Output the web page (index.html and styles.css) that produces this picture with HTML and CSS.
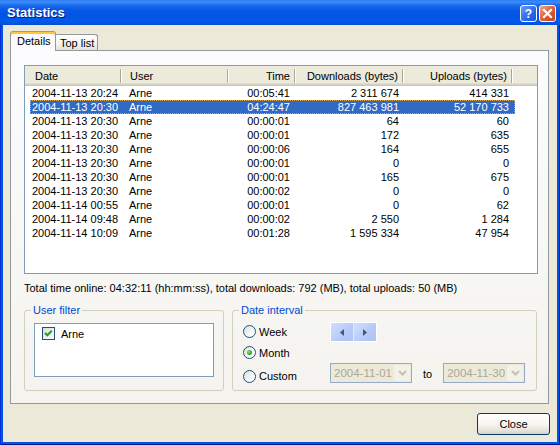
FILE: index.html
```html
<!DOCTYPE html>
<html>
<head>
<meta charset="utf-8">
<title>Statistics</title>
<link rel="stylesheet" href="styles.css">
</head>
<body>
<div class="window">
  <div class="titlebar">
    <span class="title">Statistics</span>
    <div class="tb-buttons">
      <span class="tb-btn help">?</span>
      <span class="tb-btn close">
        <svg width="11" height="11" viewBox="0 0 11 11"><path d="M2 2 L9 9 M9 2 L2 9" stroke="#fff" stroke-width="2.2" stroke-linecap="square"/></svg>
      </span>
    </div>
  </div>
  <div class="client">
    <div class="tabs">
      <div class="tab active">Details</div>
      <div class="tab">Top list</div>
    </div>
    <div class="panel">
      <div class="list">
        <div class="lv-header">
          <div class="hc c-date">Date</div>
          <div class="hc c-user">User</div>
          <div class="hc c-time r">Time</div>
          <div class="hc c-dl r">Downloads (bytes)</div>
          <div class="hc c-ul r">Uploads (bytes)</div>
          <div class="hc-fill"></div>
        </div>
        <div class="rows">
          <div class="row"><span class="c c-date">2004-11-13 20:24</span><span class="c c-user">Arne</span><span class="c c-time r">00:05:41</span><span class="c c-dl r">2 311 674</span><span class="c c-ul r">414 331</span></div>
          <div class="row sel"><span class="c c-date">2004-11-13 20:30</span><span class="c c-user">Arne</span><span class="c c-time r">04:24:47</span><span class="c c-dl r">827 463 981</span><span class="c c-ul r">52 170 733</span></div>
          <div class="row"><span class="c c-date">2004-11-13 20:30</span><span class="c c-user">Arne</span><span class="c c-time r">00:00:01</span><span class="c c-dl r">64</span><span class="c c-ul r">60</span></div>
          <div class="row"><span class="c c-date">2004-11-13 20:30</span><span class="c c-user">Arne</span><span class="c c-time r">00:00:01</span><span class="c c-dl r">172</span><span class="c c-ul r">635</span></div>
          <div class="row"><span class="c c-date">2004-11-13 20:30</span><span class="c c-user">Arne</span><span class="c c-time r">00:00:06</span><span class="c c-dl r">164</span><span class="c c-ul r">655</span></div>
          <div class="row"><span class="c c-date">2004-11-13 20:30</span><span class="c c-user">Arne</span><span class="c c-time r">00:00:01</span><span class="c c-dl r">0</span><span class="c c-ul r">0</span></div>
          <div class="row"><span class="c c-date">2004-11-13 20:30</span><span class="c c-user">Arne</span><span class="c c-time r">00:00:01</span><span class="c c-dl r">165</span><span class="c c-ul r">675</span></div>
          <div class="row"><span class="c c-date">2004-11-13 20:30</span><span class="c c-user">Arne</span><span class="c c-time r">00:00:02</span><span class="c c-dl r">0</span><span class="c c-ul r">0</span></div>
          <div class="row"><span class="c c-date">2004-11-14 00:55</span><span class="c c-user">Arne</span><span class="c c-time r">00:00:01</span><span class="c c-dl r">0</span><span class="c c-ul r">62</span></div>
          <div class="row"><span class="c c-date">2004-11-14 09:48</span><span class="c c-user">Arne</span><span class="c c-time r">00:00:02</span><span class="c c-dl r">2 550</span><span class="c c-ul r">1 284</span></div>
          <div class="row"><span class="c c-date">2004-11-14 10:09</span><span class="c c-user">Arne</span><span class="c c-time r">00:01:28</span><span class="c c-dl r">1 595 334</span><span class="c c-ul r">47 954</span></div>
        </div>
      </div>
      <div class="summary">Total time online: 04:32:11 (hh:mm:ss), total downloads: 792 (MB), total uploads: 50 (MB)</div>
      <div class="groups">
        <fieldset class="group user-filter">
          <legend>User filter</legend>
          <div class="group-body uf-body">
            <div class="listbox">
              <div class="check-item">
                <span class="checkbox">
                  <svg width="11" height="11" viewBox="0 0 11 11"><polyline points="2,5 4.3,7.3 8.8,2.8" fill="none" stroke="#21A121" stroke-width="2"/></svg>
                </span>
                <span>Arne</span>
              </div>
            </div>
          </div>
        </fieldset>
        <fieldset class="group date-interval">
          <legend>Date interval</legend>
          <div class="group-body di-body">
            <div class="di-row r1">
              <div class="radio-item"><span class="radio"></span><span>Week</span></div>
              <div class="spin">
                <span class="spin-half">
                  <svg width="4" height="7" viewBox="0 0 4 7"><path d="M4 0 L0 3.5 L4 7 Z" fill="#43577D"/></svg>
                </span>
                <span class="spin-half">
                  <svg width="4" height="7" viewBox="0 0 4 7"><path d="M0 0 L4 3.5 L0 7 Z" fill="#43577D"/></svg>
                </span>
              </div>
            </div>
            <div class="di-row r2">
              <div class="radio-item"><span class="radio on"><span class="dot"></span></span><span>Month</span></div>
            </div>
            <div class="di-row r3">
              <div class="radio-item"><span class="radio"></span><span>Custom</span></div>
              <div class="combo"><span class="combo-text">2004-11-01</span><span class="combo-btn"><svg width="9" height="6" viewBox="0 0 9 6"><path d="M1 1 L4.5 4.5 L8 1" fill="none" stroke="#C4C2B5" stroke-width="2"/></svg></span></div>
              <span class="to">to</span>
              <div class="combo"><span class="combo-text">2004-11-30</span><span class="combo-btn"><svg width="9" height="6" viewBox="0 0 9 6"><path d="M1 1 L4.5 4.5 L8 1" fill="none" stroke="#C4C2B5" stroke-width="2"/></svg></span></div>
            </div>
          </div>
        </fieldset>
      </div>
    </div>
    <div class="footer">
      <button class="btn">Close</button>
    </div>
  </div>
</div>
</body>
</html>
```
FILE: styles.css
```css
* { box-sizing: border-box; }
html, body { margin: 0; padding: 0; }
body {
  width: 560px;
  height: 445px;
  overflow: hidden;
  font-family: "Liberation Sans", Arial, sans-serif;
  font-size: 11px;
  color: #000;
  background: #0055E5;
}

.window {
  width: 560px;
  height: 445px;
  display: flex;
  flex-direction: column;
  background: #0055E5;
  box-shadow: inset 1px 0 #0831D9, inset -1px 0 #001EA0, inset 0 -1px #00138C;
}

.titlebar {
  height: 25px;
  flex: none;
  display: flex;
  align-items: center;
  padding: 0 4px 0 7px;
  background: linear-gradient(#2C7BF6 0, #3D8EF8 2px, #1D6BEE 5px, #0858E6 10px, #0055E5 16px, #0259EC 21px, #0550D8 25px);
}
.title {
  flex: 1;
  color: #fff;
  font-weight: bold;
  font-size: 13px;
  text-shadow: 1px 1px #0A1883;
}
.tb-buttons { display: flex; gap: 2px; margin-top: 2px; }
.tb-btn {
  width: 17px;
  height: 17px;
  border: 1px solid #fff;
  border-radius: 3px;
  display: flex;
  align-items: center;
  justify-content: center;
  color: #fff;
  font-weight: bold;
  font-size: 12px;
}
.help { background: linear-gradient(135deg, #6C9DF9, #2A68EC 60%, #1C55D6); }
.close { background: linear-gradient(135deg, #EDA58B, #DD5A32 55%, #C2421D); }

.client {
  flex: 1;
  margin: 0 3px 3px 3px;
  background: #ECE9D8;
  padding: 6px 8px 0 7px;
  display: flex;
  flex-direction: column;
}

.tabs {
  display: flex;
  align-items: flex-end;
  height: 20px;
  margin-bottom: -1px;
  position: relative;
  z-index: 1;
}
.tab {
  height: 16px;
  width: 42px;
  margin-bottom: 1px;
  padding-left: 4px;
  border: 1px solid #919B9C;
  border-bottom: none;
  border-left: none;
  border-radius: 0 3px 0 0;
  background: linear-gradient(#FFFFFF, #F3F3EF 60%, #E2E1DA);
  display: flex;
  align-items: center;
}
.tab.active {
  height: 20px;
  width: 46px;
  margin-bottom: 0;
  padding-left: 6px;
  padding-bottom: 2px;
  border-left: 1px solid #919B9C;
  border-top: 1px solid #E68B2C;
  border-radius: 3px 3px 0 0;
  background: #FCFCFE;
  box-shadow: inset 0 2px #FFC73C;
}

.panel {
  width: 539px;
  height: 354px;
  border: 1px solid #919B9C;
  background: linear-gradient(#FCFCFE, #F4F3EE);
  padding: 14px 0 0 13px;
}

.list {
  width: 514px;
  height: 209px;
  border: 1px solid #7F9DB9;
  background: #fff;
}
.lv-header {
  display: flex;
  height: 20px;
  background: linear-gradient(#EBEADB 0, #EBEADB 17px, #E2DECD 17px, #E2DECD 18px, #D6D2C2 18px, #D6D2C2 19px, #CBC7B8 19px);
}
.hc {
  height: 17px;
  display: flex;
  align-items: center;
  padding-top: 2px;
  background: linear-gradient(to right, #ACA899 0, #ACA899 1px, #fff 1px, #fff 2px) no-repeat right 0 top 3px / 2px 14px;
}
.hc-fill { flex: 1; }
.hc.c-date { width: 97px; padding-left: 10px; }
.hc.c-user { width: 107px; padding-left: 8px; }
.hc.c-time { width: 67px; }
.hc.c-dl { width: 108px; }
.hc.c-ul { width: 109px; }
.hc.r { justify-content: flex-end; padding-right: 6px; }

.rows { padding-top: 0; }
.row {
  display: flex;
  height: 14px;
  line-height: 14px;
  margin-left: 5px;
  width: 485px;
  white-space: nowrap;
}
.row.sel {
  background: #316AC5;
  color: #fff;
  outline: 1px dotted #D9A64E;
  outline-offset: -1px;
}
.c { display: block; }
.c.c-date { width: 92px; padding-left: 2px; }
.c.c-user { width: 107px; padding-left: 7px; }
.c.c-time { width: 67px; padding-right: 6px; }
.c.c-dl { width: 108px; padding-right: 5px; }
.c.c-ul { width: 109px; padding-right: 4px; }
.c.r { text-align: right; }

.summary {
  margin-top: 7px;
  line-height: 14px;
  white-space: nowrap;
}

.groups {
  display: flex;
  gap: 8px;
  margin-top: 8px;
}
.group {
  margin: 0;
  padding: 0;
  height: 88px;
  border: 1px solid #D0D0BF;
  border-radius: 3px;
  min-width: 0;
}
.group legend {
  color: #0046D5;
  padding: 0 2px;
  margin-left: 6px;
  line-height: 14px;
  font-size: 11px;
}
.user-filter { width: 200px; }
.date-interval { width: 305px; }

.uf-body { padding: 6px 0 0 9px; }
.listbox {
  width: 180px;
  height: 54px;
  border: 1px solid #7F9DB9;
  background: #fff;
  padding: 3px 0 0 7px;
}
.check-item {
  display: flex;
  align-items: center;
  gap: 6px;
  height: 13px;
}
.checkbox {
  width: 13px;
  height: 13px;
  border: 1px solid #1C5180;
  background: linear-gradient(135deg, #DCDCD7, #FFFFFF);
  display: flex;
  align-items: center;
  justify-content: center;
}

.di-body {
  padding: 4px 0 0 10px;
  display: flex;
  flex-direction: column;
}
.di-row { display: flex; align-items: center; }
.di-row.r1 { height: 21px; }
.di-row.r2 { height: 21px; }
.di-row.r3 { height: 20px; align-items: flex-end; }
.radio-item {
  width: 87px;
  height: 14px;
  display: flex;
  align-items: center;
  gap: 3px;
}
.radio {
  width: 13px;
  height: 13px;
  border-radius: 50%;
  border: 1px solid #1C5180;
  background: linear-gradient(135deg, #DCDCD7, #FFFFFF 80%);
  display: flex;
  align-items: center;
  justify-content: center;
}
.dot {
  width: 5px;
  height: 5px;
  border-radius: 50%;
  background: radial-gradient(circle at 35% 35%, #7BE07B, #21A121 70%);
}

.spin {
  display: flex;
  width: 47px;
  height: 20px;
  border: 1px solid #fff;
  margin-top: 1px;
}
.spin-half {
  flex: 1;
  display: flex;
  align-items: center;
  justify-content: center;
  background: linear-gradient(135deg, #D3DEFC, #B6C9F8 60%, #AFC4F6);
}
.spin-half + .spin-half { border-left: 1px solid #E4EAF9; }

.combo {
  width: 82px;
  height: 20px;
  border: 1px solid #95AAC5;
  background: #ECE9D8;
  display: flex;
  align-items: center;
  padding: 1px;
  align-self: flex-start;
}
.combo-text {
  flex: 1;
  color: #ACA899;
  padding-left: 2px;
  font-size: 11.5px;
}
.combo-btn {
  width: 16px;
  height: 16px;
  border-radius: 2px;
  background: #F3F1EA;
  display: flex;
  align-items: center;
  justify-content: center;
}
.to {
  margin: 0 11px;
  align-self: center;
  line-height: 14px;
  padding-top: 2px;
}

.footer {
  display: flex;
  justify-content: flex-end;
  padding-top: 9px;
  margin-right: -1px;
}
.btn {
  width: 73px;
  height: 22px;
  border: 1px solid #003C74;
  border-radius: 3px;
  background: linear-gradient(#FFFFFF, #F5F4F0 55%, #E3E1D8 85%, #D6D0C5);
  font-family: "Liberation Sans", Arial, sans-serif;
  font-size: 11px;
  color: #000;
  padding: 0;
}
```
